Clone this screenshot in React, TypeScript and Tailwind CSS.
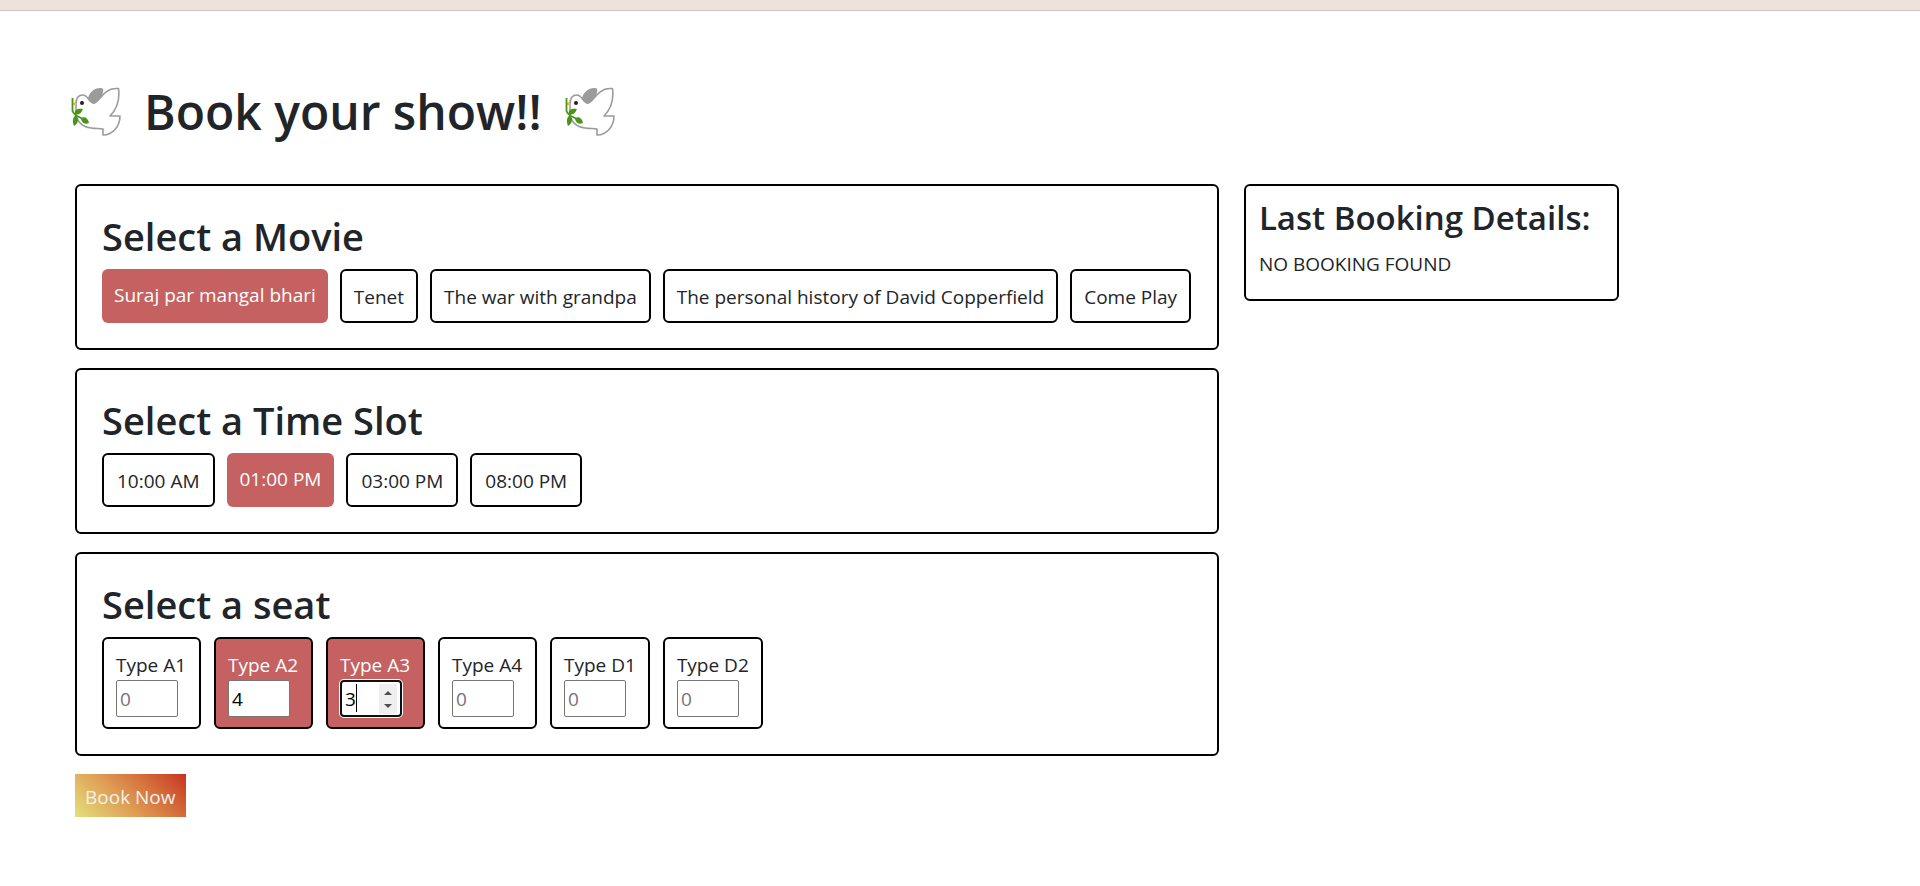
import { useState } from "react";

const MOVIES = [
  "Suraj par mangal bhari",
  "Tenet",
  "The war with grandpa",
  "The personal history of David Copperfield",
  "Come Play",
];
const SLOTS = ["10:00 AM", "01:00 PM", "03:00 PM", "08:00 PM"];
const SEATS = ["A1", "A2", "A3", "A4", "D1", "D2"];

function Dove() {
  return (
    <svg viewBox="0 0 50 50" className="size-[50px] shrink-0" aria-hidden="true" fill="none">
      <path
        d="M5 17C5 11 8 8 12 8C17 8 18 16 23 16C28 16 32 1.500 45 1.500H47.500C49 13 46 22 39 29H49C49 39 42 48 32 48V42C29 41 25 42 20 41C12 40 5 35 5 25Z"
        fill="#fff"
        stroke="#9b9b9b"
        strokeWidth="1.600"
        strokeLinejoin="round"
      />
      <path d="M17 11C19 4 25 0 31 1.200Q33 2 32 5L31 9L23 17Q19 16 17 11Z" fill="#9b9b9b" />
      <circle cx="11" cy="16" r="2" fill="#212121" />
      <path d="M0.500 17L5 14.500V19Z" fill="#f9b52c" />
      <path d="M1.500 11V24Q3 28 8 30L14 33" stroke="#479618" strokeWidth="1.800" />
      <path d="M3.500 27C3.500 22 7 21 12 22C10 27 7 28.500 3.500 27Z" fill="#479618" />
      <path d="M4.500 28.500C8 31 8 36 3 39C1 34 2 30 4.500 28.500Z" fill="#479618" />
      <path d="M10 32C12 29 17 30 18 36C14 38 11 36 10 32Z" fill="#479618" />
    </svg>
  );
}

function Panel({ title, children }: { title: string; children: React.ReactNode }) {
  return (
    <section className="rounded-md border-2 border-black p-[25px]">
      <h2 className="mb-2 text-[38px] leading-[50px] font-semibold">{title}</h2>
      {children}
    </section>
  );
}

type ChoiceProps = { label: string; active: boolean; roomy?: boolean; onClick: () => void };

function Choice({ label, active, roomy, onClick }: ChoiceProps) {
  return (
    <button
      type="button"
      aria-pressed={active}
      onClick={onClick}
      className={[
        "flex items-start rounded-md pt-[11px] pb-[9px] whitespace-nowrap",
        roomy ? "px-[13px]" : "px-3",
        active ? "bg-[#c56161] text-white" : "border-2 border-black",
      ].join(" ")}
    >
      {label}
    </button>
  );
}

export default function App() {
  const [movie, setMovie] = useState(MOVIES[0]);
  const [slot, setSlot] = useState(SLOTS[1]);
  const [seats, setSeats] = useState<Record<string, string>>({ A2: "4", A3: "3" });
  const [current, setCurrent] = useState("A3");

  const step = (seat: string, by: number) =>
    setSeats((s) => ({ ...s, [seat]: String(Math.max(0, Number(s[seat] || 0) + by)) }));

  return (
    <div className="min-h-screen bg-white font-['Open_Sans','Noto_Sans',sans-serif] text-[19px] leading-[30px] text-[#212529]">
      <header className="h-[11px] border-b border-[#d3c3c3] bg-[#ede2de]" />
      <main className="pt-[71px] pl-[75px]">
        <h1 className="-ml-1 flex items-center gap-[23px] text-[48px] leading-[60px] font-semibold">
          <Dove />
          Book your show!!
          <Dove />
        </h1>
        <div className="mt-[42px] flex items-start gap-[25px]">
          <div className="flex w-[62%] flex-col items-stretch gap-[18px]">
            <Panel title="Select a Movie">
              <div className="flex gap-3">
                {MOVIES.map((m) => (
                  <Choice key={m} label={m} active={m === movie} onClick={() => setMovie(m)} />
                ))}
              </div>
            </Panel>
            <Panel title="Select a Time Slot">
              <div className="flex gap-3">
                {SLOTS.map((s) => (
                  <Choice key={s} label={s} roomy active={s === slot} onClick={() => setSlot(s)} />
                ))}
              </div>
            </Panel>
            <Panel title="Select a seat">
              <div className="flex gap-[13px]">
                {SEATS.map((seat) => {
                  const value = seats[seat] ?? "";
                  const focused = seat === current;
                  return (
                    <div
                      key={seat}
                      className={
                        value
                          ? "min-w-[99px] rounded-md border-2 border-black bg-[#c56161] px-3 pt-[11px] pb-[10px] text-white"
                          : "min-w-[99px] rounded-md border-2 border-black px-3 pt-[11px] pb-[10px]"
                      }
                    >
                      <label htmlFor={`seat-${seat}`} className="block whitespace-nowrap">
                        Type {seat}
                      </label>
                      <div className="relative w-[62px]">
                        <input
                          id={`seat-${seat}`}
                          type="number"
                          placeholder="0"
                          value={value}
                          onFocus={() => setCurrent(seat)}
                          onChange={(e) => setSeats((s) => ({ ...s, [seat]: e.target.value }))}
                          className={
                            focused
                              ? "block h-[37px] w-full rounded-sm border-2 border-[#101010] bg-white px-[3px] text-black caret-transparent shadow-[0_0_0_1px_#ffffff] outline-none [appearance:textfield] placeholder:text-[#757575]"
                              : "block h-[37px] w-full rounded-xs border border-[#767676] bg-white px-[3px] text-black outline-none [appearance:textfield] placeholder:text-[#757575]"
                          }
                        />
                        {focused && (
                          <>
                            <span className="absolute top-1 left-4 h-7 w-px bg-black" />
                            <span className="absolute top-1 right-[5px] flex h-[30px] w-[18px] flex-col justify-center bg-[#efefef]">
                              <button type="button" tabIndex={-1} aria-label="Increase" onClick={() => step(seat, 1)} className="flex h-[13px] items-center justify-center">
                                <svg viewBox="0 0 8 4" className="h-1 w-2" fill="#505050"><path d="M0 4L4 0L8 4Z" /></svg>
                              </button>
                              <button type="button" tabIndex={-1} aria-label="Decrease" onClick={() => step(seat, -1)} className="flex h-[13px] items-center justify-center">
                                <svg viewBox="0 0 8 4" className="h-1 w-2" fill="#505050"><path d="M0 0L4 4L8 0Z" /></svg>
                              </button>
                            </span>
                          </>
                        )}
                      </div>
                    </div>
                  );
                })}
              </div>
            </Panel>
            <button
              type="button"
              className="self-start bg-linear-45 from-[#e3e07b] to-[#c5301f] px-[10px] pt-2 pb-[5px] text-[#f0f0f0]"
            >
              Book Now
            </button>
          </div>
          <aside className="w-[375px] rounded-md border-2 border-black px-[13px] pt-[11px] pb-5">
            <h3 className="mb-[10px] text-[33px] leading-[42px] font-semibold whitespace-nowrap">Last Booking Details:</h3>
            <p>NO BOOKING FOUND</p>
          </aside>
        </div>
      </main>
    </div>
  );
}
